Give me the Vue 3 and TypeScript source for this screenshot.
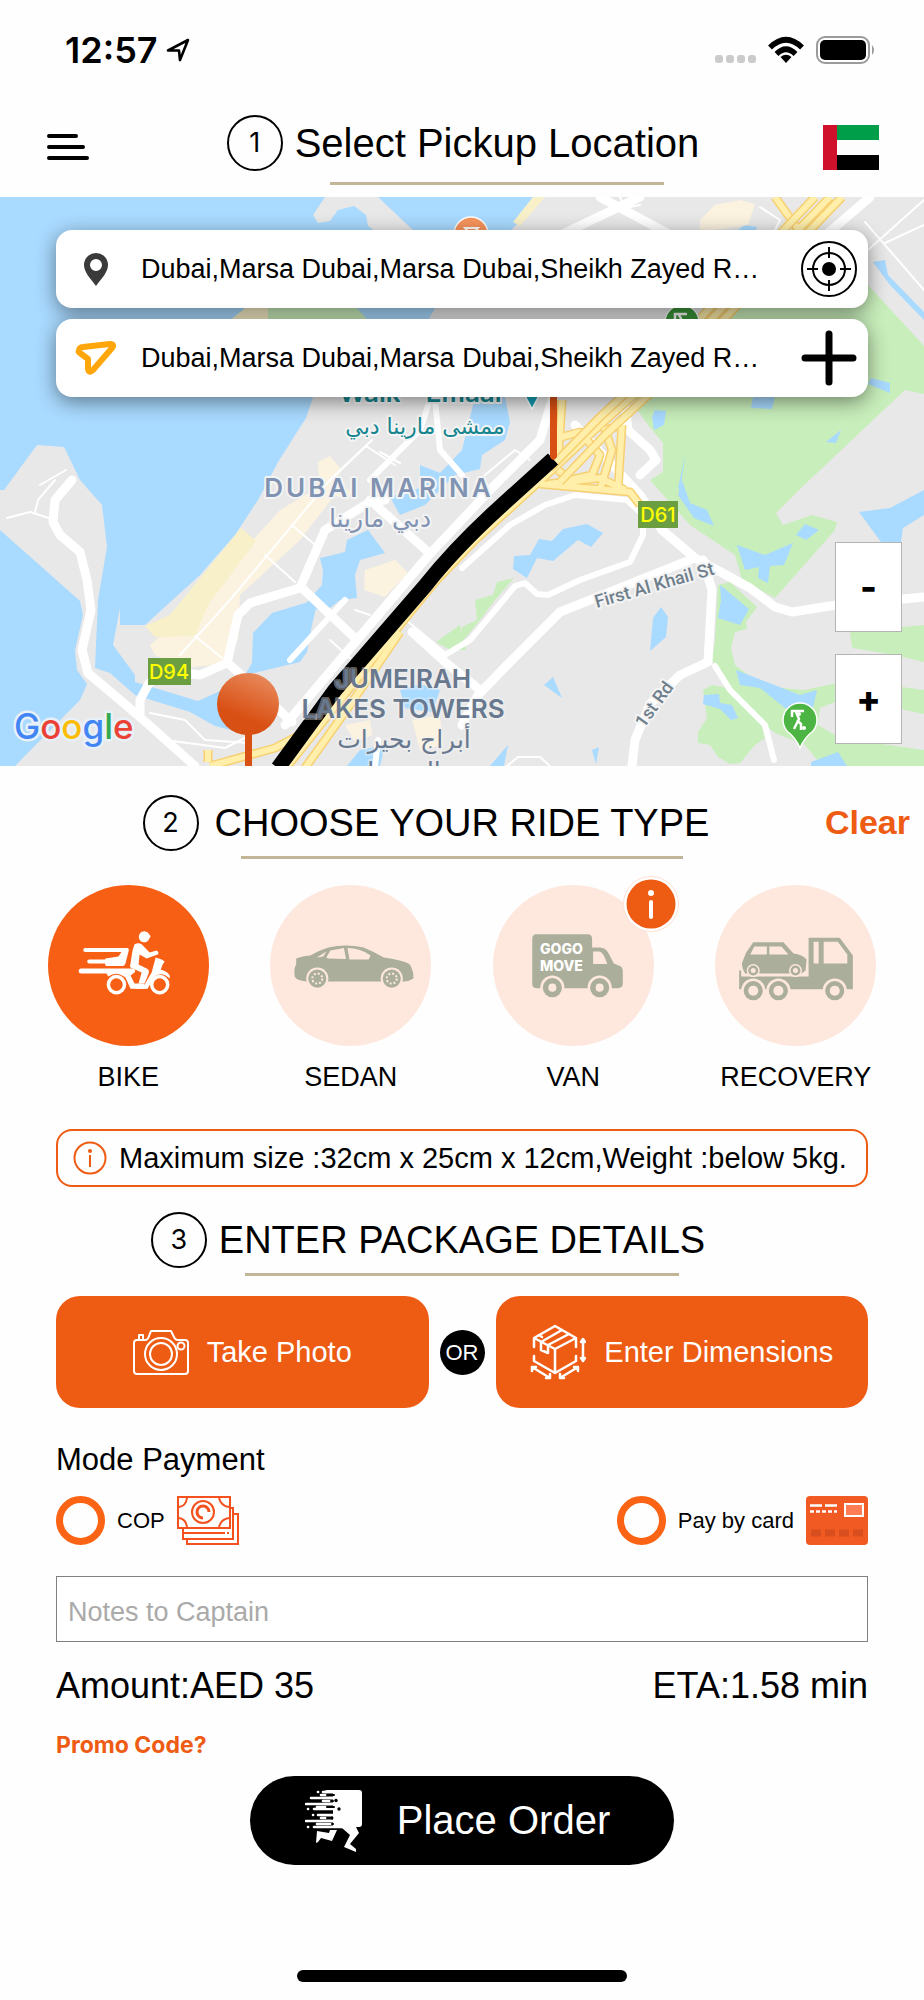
<script setup lang="ts">
import { ref } from 'vue'

interface Ride {
  id: string
  label: string
}

const rides: Ride[] = [
  { id: 'bike', label: 'BIKE' },
  { id: 'sedan', label: 'SEDAN' },
  { id: 'van', label: 'VAN' },
  { id: 'recovery', label: 'RECOVERY' },
]

const selectedRide = ref('bike')
const payment = ref('')
const notes = ref('')
const pickup = ref('Dubai,Marsa Dubai,Marsa Dubai,Sheikh Zayed R…')
const dropoff = ref('Dubai,Marsa Dubai,Marsa Dubai,Sheikh Zayed R…')

const water: string[] = [
  'M0 197H533L516 225 440 300 425 325H360L313 397 306 418 278 462 258 500 235 535 200 575 178 595 145 625H120V608L113 645 135 675V682L198 701 222 690 250 685 250 735 215 726 190 712 135 695 110 673 95 668 98 600 107 547 102 505 80 480 64 447 37 445 4 490H0Z',
  'M0 530 80 601 83 615 75 650 77 670 87 684 80 700 15 766H0Z',
  'M253 633 272 613 305 603 318 600 312 625 307 652 300 662 275 668 245 675 252 663Z',
  'M320 558 345 552 347 540 368 530 385 553 360 560 355 575 357 598 340 600 325 612 305 605 315 593 322 585 323 570Z',
  'M505 397 510 422 505 440 482 455 480 469 455 475 425 505 400 515 390 497 420 488V465L440 473 462 450 475 397Z',
  'M400 690 420 684 440 690 432 712 405 708Z',
  'M347 766 360 750 385 745 380 766Z',
]

const parks: string[] = [
  'M868 285 924 346V394L905 390 800 489 776 513 783 525 812 515 837 522 835 530 775 598 742 580 735 555 690 525 650 480 663 472V443L648 425 634 405 640 385 735 308V290Z',
  'M718 585 730 582 757 607 746 622 747 629 735 632 731 648 735 665 755 680 780 688 805 690 850 680 924 690V714L905 710 870 695 840 700 820 708 818 725 840 738 924 750V766H822L805 745 775 733 765 725 725 685 712 660 715 640Z',
  'M703 690 712 685 728 688 732 696 747 705 760 720 765 738 755 745 740 763 730 764 718 757 710 745 698 743V732L707 718Z',
  'M850 632 924 625V662L895 655 852 648Z',
  'M475 600 493 595 497 582 514 578 495 600 480 620 462 642V627L477 620Z',
  'M436 642 460 625 466 650 450 650Z',
  'M268 300H350L372 325H268Z',
]

const ponds: string[] = [
  'M682 480 690 503 707 510 714 526 694 518 678 495Z',
  'M737 545 765 555 793 543 784 565 770 566 768 583 758 578 759 567 745 570Z',
  'M796 535 805 524 819 530 806 540Z',
  'M720 585 749 609 740 625 718 618 721 600Z',
  'M859 512 890 508 924 490V515L903 528 901 542H881Z',
  'M736 670 800 695 817 690 812 712 785 708 760 688 740 685Z',
  'M704 695 719 694 720 703 732 705 738 718 731 720 720 709 703 704Z',
  'M514 556 530 555 539 539 552 541 563 529 587 524 603 533 591 547 578 540 553 561 537 558 527 578 513 569Z',
  'M661 607 668 617 666 637 650 651 653 618Z',
  'M544 685 553 677 562 698Z',
  'M592 750 599 747 596 764Z',
  'M655 410 666 411 664 425 654 430 652 417Z',
  'M753 397H775L772 409 751 408Z',
  'M871 378 890 383 890 393 868 384Z',
  'M686 452 680 490 678 488Z',
  'M841 430 836 443 826 442Z',
  'M873 262 885 260 888 275 924 312V320L890 285Z',
  'M490 766 508 745 504 766Z',
  'M811 762 838 752 847 766H811Z',
  'M735 232 745 225 757 227 755 232Z',
]

const sands: string[] = [
  'M330 480 345 482 300 540 240 595 238 640 220 664 185 668 155 655 150 645 190 610 235 560 280 510Z',
  'M365 570 395 560 408 573 385 597 364 590Z',
  'M318 462 330 456 342 470 334 482 352 492 348 500 320 490Z',
  'M700 220 715 205 740 200 755 204 748 225 700 232Z',
  'M345 725 370 720 372 735 355 742Z',
  'M412 720 440 715 443 745 420 750Z',
]

const beaches: string[] = [
  'M241 528 256 541 208 605 195 636 155 637 145 626 170 615Z',
  'M533 197H545L520 226 513 222Z',
  'M255 300H268V322H228Z',
]

const wideRoads: string[] = [
  'M72 480 55 500 53 522 60 535 80 552 87 580 91 610 82 650 88 673 140 717 195 766',
  'M140 717 140 700 148 685 160 670 200 675 227 663 238 615 250 603 300 588 312 560 325 530 370 502 385 500',
  'M370 500 428 552',
  'M302 588 357 640',
  'M228 663 292 722',
  'M285 725 357 640 428 556 490 490 540 440 552 400',
  'M575 425 640 495 662 530 695 558 750 588 775 607 792 612 830 606 924 597',
  'M703 560 712 590 708 662 680 675 650 704 635 740 632 766',
  'M690 560 640 580 560 612 510 662 478 695 462 725',
  'M412 632 445 662 480 690',
  'M550 240 640 197M600 197 680 240M820 240 870 197',
  'M625 405 628 430 650 450 656 460 640 475',
]

const midRoads: string[] = [
  'M462 568 510 525 545 505 575 495 627 500 643 515V535L630 562 580 580 548 595 537 594 525 583 515 586 470 640 445 655 415 630',
  'M715 666 730 690 765 725 774 760',
  'M370 480 420 430 430 400M435 400 440 450 462 475',
  'M375 766 378 740M290 660 345 600',
]

const thinRoads: string[] = [
  'M180 655 230 600 330 480 372 440',
  'M265 555 295 582M195 636 222 658M292 525 315 545',
  'M150 713 185 720 205 740 250 743M145 720 165 740 225 748 260 730',
  'M7 518 30 512 55 520M35 512 38 500 55 480M40 485 66 470',
  'M330 480 366 446 395 465M380 452 400 463',
  'M924 200 840 275M865 222 924 290M885 243 924 225',
  'M485 475 515 450 530 460',
  'M507 766 518 757 540 757 550 766',
  'M400 615 430 640M330 640 350 658M355 610 370 615',
  'M620 197 625 208 640 205M760 207 780 220 775 230',
]

const highways: string[] = [
  'M286 768 345 694 412 610 435 582 475 540 550 472 600 425 660 372 830 197',
  'M305 768 350 705 400 632',
  'M540 484 630 492 640 505',
  'M558 462 562 400M558 438 580 432 600 455 592 475 570 480 558 470',
  'M622 425 605 430 612 450 600 490M622 425 618 490M548 484 600 478 625 490',
  'M775 197 795 225 800 230',
  'M208 762 208 750M210 766 275 748 300 735',
]
</script>

<template>
  <main class="screen">
    <div class="status">
      <div class="clock">
        <span>12:57</span>
        <svg width="24" height="24" viewBox="0 0 24 24" aria-hidden="true">
          <path d="M2 12.500 22 2 14 22 13 12.500Z" fill="none" stroke="#000" stroke-width="2.600" stroke-linejoin="round" />
        </svg>
      </div>
      <div class="signals">
        <svg width="41" height="28" viewBox="0 0 41 28" aria-hidden="true">
          <g fill="#cbcbcb">
            <rect x="0" y="19" width="8" height="8" rx="3" /><rect x="11" y="19" width="8" height="8" rx="3" />
            <rect x="22" y="19" width="8" height="8" rx="3" /><rect x="33" y="19" width="8" height="8" rx="3" />
          </g>
        </svg>
        <svg width="36" height="28" viewBox="0 0 36 28" aria-hidden="true">
          <g fill="none" stroke="#000" stroke-width="5.500">
            <path d="M2 11.500Q18-4 34 11.500" /><path d="M8.500 18Q18 8.500 27.500 18" />
          </g>
          <path d="M18 27 12.500 21Q18 16.500 23.500 21Z" />
        </svg>
        <svg width="60" height="28" viewBox="0 0 60 28" aria-hidden="true">
          <rect x="1" y="1" width="52" height="26" rx="8" fill="none" stroke="#9b9b9b" stroke-width="2" />
          <rect x="4" y="4" width="46" height="20" rx="5" />
          <path d="M56 9Q60 14 56 19Z" fill="#9b9b9b" />
        </svg>
      </div>
    </div>

    <header class="topbar">
      <button class="icon-button menu" type="button" aria-label="Menu">
        <svg width="42" height="28" viewBox="0 0 42 28">
          <g stroke="#000" stroke-width="4" stroke-linecap="round"><path d="M2 3H29M2 14H36M2 25H40" /></g>
        </svg>
      </button>
      <div class="step-title">
        <span class="step">1</span>
        <h1 class="title wide">Select Pickup Location</h1>
      </div>
      <button class="icon-button flag" type="button" aria-label="Country">
        <svg width="56" height="45" viewBox="0 0 56 45">
          <rect width="56" height="15" fill="#009e49" /><rect y="15" width="56" height="15" fill="#fdfdfd" />
          <rect y="30" width="56" height="15" /><rect width="14" height="45" fill="#d0112b" />
        </svg>
      </button>
    </header>

    <section class="map" aria-label="Map">
      <svg class="map-art" viewBox="0 197 924 569" preserveAspectRatio="xMidYMid slice" aria-hidden="true">
        <defs>
          <linearGradient id="ball" x1="0.700" y1="0" x2="0.400" y2="0.700">
            <stop offset="0" stop-color="#e88a5c" /><stop offset="1" stop-color="#d95014" />
          </linearGradient>
        </defs>
        <rect y="197" width="924" height="569" fill="#e8e8e8" />
        <path v-for="d in water" :key="d" :d="d" fill="#a9daff" />
        <path d="M325 197 313 215 318 223 330 221 338 210 354 206 366 215 368 226 376 232H415L378 197Z" fill="#e8e8e8" />
        <path v-for="d in parks" :key="d" :d="d" fill="#c8eebb" />
        <path v-for="d in ponds" :key="d" :d="d" fill="#a9daff" />
        <path v-for="d in sands" :key="d" :d="d" fill="#fbf3e0" />
        <path v-for="d in beaches" :key="d" :d="d" fill="#f8f0c8" />
        <g fill="none" stroke="#fff" stroke-linejoin="round" stroke-linecap="round">
          <path v-for="d in thinRoads" :key="d" :d="d" stroke-width="2" />
          <path v-for="d in midRoads" :key="d" :d="d" stroke-width="6" />
          <path v-for="d in wideRoads" :key="d" :d="d" stroke-width="9" />
        </g>
        <g fill="none" stroke-linejoin="round">
          <path v-for="d in highways" :key="d" :d="d" stroke="#f8d070" stroke-width="9" />
          <path v-for="d in highways" :key="d" :d="d" stroke="#ffefab" stroke-width="6" />
          <path d="M550 468 600 417 655 366 815 197M560 482 606 434 668 377 842 197" stroke="#f8d070" stroke-width="9" />
          <path d="M550 468 600 417 655 366 815 197M560 482 606 434 668 377 842 197" stroke="#ffefab" stroke-width="6" />
          <path d="M553 459 500 507Q455 548 425 586L335 690 278 768" stroke="#000" stroke-width="15" />
        </g>
        <path d="M550 390H557V457Q553 463 550 457Z" fill="#d95014" />
        <path d="M245 730H252V766H245Z" fill="#d95014" />
        <circle cx="248" cy="704" r="31" fill="url(#ball)" />

        <g stroke="#fff" stroke-width="1.500">
          <circle cx="471" cy="234" r="17" fill="#f7945c" />
          <path d="M800 748Q796 738 787 731A17 17 0 1 1 813 731Q804 738 800 748Z" fill="#4cb443" />
          <circle cx="682" cy="322" r="17" fill="#3b963a" />
          <path d="M522 390H542L532 409Z" fill="#16a0b5" />
        </g>
        <path d="M465 228H478L473 234H470Z" fill="none" stroke="#fff" stroke-width="2" />
        <g fill="none" stroke="#fff" stroke-width="2.500">
          <path d="M792 717V711H804M796 712 799 719 794 729M797 720 801 724V730" />
          <path d="M675 320V314H687M679 315 683 322" />
        </g>
        <circle cx="799" cy="714" r="2" fill="#fff" /><circle cx="804" cy="728" r="2" fill="#fff" />

        <rect x="148" y="658" width="43" height="27" fill="#6a9e40" />
        <rect x="638" y="501" width="40" height="27" fill="#6a9e40" />
        <g class="sign"><text x="169" y="679">D94</text><text x="658" y="522">D61</text></g>

        <g class="label teal"><text x="422" y="402">Walk - Emaar</text><text x="425" y="434" class="ar small">ممشى مارينا دبي</text></g>
        <g class="label marina"><text x="379" y="497" class="spaced">DUBAI MARINA</text><text x="380" y="527" class="ar">دبي مارينا</text></g>
        <g class="label towers">
          <text x="403" y="688">JUMEIRAH</text><text x="403" y="718">LAKES TOWERS</text>
          <text x="404" y="748" class="ar">أبراج بحيرات</text><text x="404" y="780" class="ar">الجميرا</text>
        </g>
        <g class="label street">
          <text transform="translate(656 591) rotate(-16)">First Al Khail St</text>
          <text transform="translate(659 708) rotate(-54)">1st Rd</text>
        </g>
        <text class="google" x="14" y="739"><tspan fill="#4285f4">G</tspan><tspan fill="#ea4335">o</tspan><tspan fill="#fbbc05">o</tspan><tspan fill="#4285f4">g</tspan><tspan fill="#34a853">l</tspan><tspan fill="#ea4335">e</tspan></text>
      </svg>

      <div class="places">
        <div class="place">
          <svg class="place-icon" width="42" height="36" viewBox="0 0 42 36" aria-hidden="true">
            <path fill-rule="evenodd" d="M21 2A12 12 0 0 0 9 14C9 21 15 27 21 35C27 27 33 21 33 14A12 12 0 0 0 21 2ZM21 8A6 6 0 1 1 21 20A6 6 0 1 1 21 8Z" fill="#3a3a3a" />
          </svg>
          <input v-model="pickup" type="text" aria-label="Pickup location">
          <button class="icon-button" type="button" aria-label="Use my location">
            <svg width="56" height="56" viewBox="0 0 56 56">
              <g fill="none" stroke="#000" stroke-width="2">
                <circle cx="28" cy="28" r="27" /><circle cx="28" cy="28" r="16" />
                <path d="M28 6V17M28 39V50M6 28H17M39 28H50" />
              </g>
              <circle cx="28" cy="28" r="7" />
            </svg>
          </button>
        </div>
        <div class="place">
          <svg class="place-icon" width="42" height="36" viewBox="0 0 42 36" aria-hidden="true">
            <path d="M4 10Q5 7 8 7L35 4Q40 4 37 8L18 30Q14 34 13 29V19L5 13Q3 12 4 10Z" fill="none" stroke="#ffa60a" stroke-width="6" stroke-linejoin="round" />
          </svg>
          <input v-model="dropoff" type="text" aria-label="Drop-off location">
          <button class="icon-button" type="button" aria-label="Add stop">
            <svg width="56" height="56" viewBox="0 0 56 56">
              <path d="M28 4V52M4 28H52" stroke="#000" stroke-width="7" stroke-linecap="round" />
            </svg>
          </button>
        </div>
      </div>

      <div class="zoom">
        <button type="button" aria-label="Zoom out">-</button>
        <button type="button" aria-label="Zoom in">+</button>
      </div>
    </section>

    <section>
      <div class="section-head">
        <span class="step">2</span>
        <h2 class="title">CHOOSE YOUR RIDE TYPE</h2>
        <button class="clear" type="button" @click="selectedRide = ''">Clear</button>
      </div>
      <div class="rides">
        <div v-for="ride in rides" :key="ride.id" class="ride-cell">
          <button
            class="ride"
            :class="{ active: selectedRide === ride.id }"
            type="button"
            :aria-pressed="selectedRide === ride.id"
            @click="selectedRide = ride.id"
          >
            <svg class="ride-art" viewBox="0 0 160 160" aria-hidden="true">
              <circle class="disc" cx="80" cy="80" r="80" />
              <g v-if="ride.id === 'bike'" fill="#fff">
                <path d="M96 46A5.500 5.500 0 1 0 99.500 55.500L102 51 99 47Z" />
                <path d="M37 62.500H79Q81 63 80 66L77 78Q76 80.500 74 80.500H58Q56 80.500 57 73L70 71 73 66.500H37A2 2 0 0 1 37 62.500Z" />
                <path d="M41 74H60V78H41A2 2 0 0 1 41 74Z" />
                <path d="M33 83H84Q88 84 86 87L82 90 86 98H95L98 103H82L77 92Q68 85 60 91L58 88H33A2.300 2.300 0 0 1 33 83Z" />
                <path d="M86 59Q90 57 93 59L101 67 108 65Q111 67 109 69L98 73 91 69 90 79 98 83Q101 84 100 88L96 98H90L93 87 82 82Q81 80 82 78L84 65Z" />
                <path d="M107 72 113 74 116 76 114 79 112 84Q119 86 121 90V93Q112 85 105 92L99 103H86V99H96L103 87Z" />
                <circle cx="68" cy="99" r="8" fill="none" stroke="#fff" stroke-width="3.500" />
                <circle cx="111" cy="99" r="8" fill="none" stroke="#fff" stroke-width="3.500" />
              </g>
              <g v-else-if="ride.id === 'sedan'">
                <path class="body" d="M26 73Q34 70 40 70 48 65 58 62 75 58 93 62 103 66 113 72 134 75 139 79 143 86 142.500 93 138 96 133 96H36Q26 95 24.500 91 23.500 83 26 79Z" />
                <path class="hole" d="M46.500 72 56 66 53 71ZM56 72 60 65 73.500 62.700 75.500 73.500 58 73ZM77 62.700Q90 63 100 70L98 74H79Z" />
                <g v-for="x in [47, 121]" :key="x">
                  <circle class="hole" :cx="x" cy="93" r="11" /><circle class="body" :cx="x" cy="93" r="9" />
                  <circle :cx="x" cy="93" r="5" fill="none" stroke="#fee8de" stroke-width="2" stroke-dasharray="2 1.900" />
                </g>
              </g>
              <g v-else-if="ride.id === 'van'">
                <path class="body" d="M43 49H94Q98.500 49 98.500 54V62H106Q112 62 115 68L120 78 125 80Q129 81 129 86V98Q129 102.500 124 102.500H43Q39 102.500 39 98V54Q39 49 43 49Z" />
                <path class="hole" d="M99.500 66H106Q110 67 113.500 78.500H99.500Z" />
                <g v-for="x in [59, 106]" :key="x">
                  <circle class="hole" :cx="x" cy="102" r="12" /><circle class="body" :cx="x" cy="102" r="9.500" />
                  <circle class="hole" :cx="x" cy="102" r="4" />
                </g>
                <g class="van-text"><text x="68" y="69">GOGO</text><text x="68" y="85">MOVE</text></g>
              </g>
              <g v-else>
                <path class="body" d="M24 85H26V91H93V52.500H124L137 70V103.500H24Z" />
                <path class="hole" d="M98 56.500H103V78H98ZM108 56.500H122L131.500 69V78H108Z" />
                <path class="body" d="M38 57H68L78 68Q87 69 91 74L90 85 86 88H30Q26 82 27 77L31 67Z" />
                <path class="hole" d="M35 69 39 61H51.500V69ZM54 61H66L73 69H54Z" />
                <g v-for="x in [38, 80]" :key="x">
                  <circle class="hole" :cx="x" cy="85" r="6.500" /><circle class="body" :cx="x" cy="85" r="5" /><circle class="hole" :cx="x" cy="85" r="2.500" />
                </g>
                <g v-for="x in [38, 63, 119]" :key="x">
                  <circle class="hole" :cx="x" cy="105" r="12" /><circle class="body" :cx="x" cy="105" r="9.500" /><circle class="hole" :cx="x" cy="105" r="5" />
                </g>
              </g>
            </svg>
            <span>{{ ride.label }}</span>
          </button>
          <button v-if="ride.id === 'van'" class="badge" type="button" aria-label="Van details">
            <svg width="56" height="56" viewBox="0 0 56 56">
              <circle cx="28" cy="28" r="27.500" fill="#fff" stroke="#fee0d2" />
              <circle cx="28" cy="28" r="24.500" fill="#ee5b13" />
              <circle cx="28" cy="17" r="3" fill="#fff" />
              <path d="M28 26V41" stroke="#fff" stroke-width="4" stroke-linecap="round" />
            </svg>
          </button>
        </div>
      </div>
      <p class="limits">
        <svg width="34" height="34" viewBox="0 0 34 34" aria-hidden="true">
          <circle cx="17" cy="17" r="15.500" fill="none" stroke="#ee5b13" stroke-width="2" />
          <circle cx="17" cy="10" r="2" fill="#ee5b13" /><path d="M17 14V26" stroke="#ee5b13" stroke-width="2" />
        </svg>
        <span>Maximum size :32cm x 25cm x 12cm,Weight :below 5kg.</span>
      </p>
    </section>

    <section>
      <div class="section-head package">
        <span class="step">3</span>
        <h2 class="title">ENTER PACKAGE DETAILS</h2>
      </div>
      <div class="package-actions">
        <button class="primary" type="button">
          <svg width="56" height="46" viewBox="0 0 56 46" aria-hidden="true">
            <g fill="none" stroke="#fff" stroke-width="2" stroke-linejoin="round">
              <path d="M4 11H12Q15 11 16 7L18 2H38L41 8Q42 11 45 11H52Q55 11 55 14V42Q55 45 52 45H4Q1 45 1 42V14Q1 11 4 11ZM6 11V6H10V11" />
              <circle cx="28" cy="25" r="16" /><circle cx="28" cy="25" r="11" /><circle cx="48" cy="17" r="3.500" />
            </g>
          </svg>
          <span>Take Photo</span>
        </button>
        <span class="or">OR</span>
        <button class="primary" type="button">
          <svg width="56" height="56" viewBox="0 0 56 56" aria-hidden="true">
            <g fill="none" stroke="#fff" stroke-width="2.500" stroke-linejoin="round" stroke-linecap="round">
              <path d="M4 14 25 2 46 14 25 25ZM4 14V23M4 32V37L25 49V25M25 49 46 37V32M46 14V23" />
              <path d="M11 18 32 6M18 21 39 10M11 18V26L18 29V21M9 11 12 13" />
              <path d="M53 16V36M51 18 53 15 55 18M51 34 53 37 55 34" />
              <path d="M2 43 20 54M2 47V43H6M20 50V54H16M48 43 30 54M48 47V43H44M30 50V54H34" />
            </g>
          </svg>
          <span>Enter Dimensions</span>
        </button>
      </div>
    </section>

    <section class="checkout">
      <fieldset class="payment">
        <legend>Mode Payment</legend>
        <div class="methods">
          <label>
            <input v-model="payment" type="radio" name="payment" value="cop">
            <span>COP</span>
            <svg width="62" height="49" viewBox="0 0 62 49" aria-hidden="true">
              <g fill="none" stroke="#f4511e" stroke-width="2">
                <rect x="1" y="1" width="52" height="31" />
                <path d="M6 33V43H56V12H54M10 44V48H61V18H57M7 37H48M50 37H52" />
                <circle cx="26" cy="16" r="11" />
                <path d="M26 22A6 6 0 1 1 32 16" stroke-width="3" />
                <path d="M2 11Q9 10 10 2M42 2Q44 10 52 11M2 22Q9 23 10 31M42 31Q44 23 52 22" />
              </g>
            </svg>
          </label>
          <label>
            <input v-model="payment" type="radio" name="payment" value="card">
            <span>Pay by card</span>
            <svg width="62" height="49" viewBox="0 0 62 49" aria-hidden="true">
              <rect width="62" height="49" rx="4" fill="#f15a22" />
              <path d="M4 9.500H16M19 9.500H31" stroke="#fff" stroke-width="2.500" />
              <path d="M4 15.500H31" stroke="#fff" stroke-width="2.500" stroke-dasharray="4 2" />
              <rect x="39" y="8" width="18" height="12" fill="#ff7d54" stroke="#fff" stroke-width="2" />
              <path d="M5 37H15M19 37H29M33 37H43M47 37H57" stroke="#d84e1f" stroke-width="7" />
            </svg>
          </label>
        </div>
      </fieldset>
      <input v-model="notes" class="notes" type="text" placeholder="Notes to Captain" aria-label="Notes to Captain">
      <div class="summary"><span>Amount:AED 35</span><span>ETA:1.58 min</span></div>
      <a class="promo" href="#promo">Promo Code?</a>
      <button class="order" type="button">
        <svg width="58" height="62" viewBox="0 0 58 62" aria-hidden="true">
          <g fill="#fff">
            <path d="M19 0H54Q57 0 57 3V34Q57 37 54 37H51L54 43 45 54 51 59V62L39 57 45 45 37 38H28V3Z" />
            <path d="M12 41 24 43 25 40H32L27 51 16 48 13 52 11 53Z" />
          </g>
          <g stroke="#fff" stroke-width="2.600" stroke-linecap="round">
            <path d="M18 2H40M13 2H13.100M6 8H40M16 5H30M1 14H40M18 11H30M3 19H3.100M9 19H40M12 17H30M8 25H8.100M13 25H40M1 31H40M16 28H30M3 37H3.100M9 37H40M12 34H30" />
          </g>
          <g stroke="#000" stroke-width="2" stroke-linecap="round">
            <path d="M22 5H29M26 11H28M22 17H29M22 22H26M22 28H26M27 34H28" />
          </g>
          <circle cx="31" cy="10.500" r="1.700" /><circle cx="34" cy="19" r="1.700" /><circle cx="27" cy="28" r="1.500" />
        </svg>
        <span>Place Order</span>
      </button>
    </section>

    <div class="home-bar"></div>
  </main>
</template>

<style>
body {
  margin: 0;
  background: #fefefe;
}
</style>

<style scoped>
* {
  box-sizing: border-box;
}

.screen {
  font-family: "Liberation Sans", Arial, sans-serif;
  font-size: 27px;
  color: #000;
  background: #fefefe;
  padding-bottom: 18px;
}

button,
input {
  font: inherit;
  color: inherit;
}

button {
  cursor: pointer;
}

svg {
  display: block;
  flex: none;
}

.icon-button {
  border: 0;
  padding: 0;
  background: none;
}

.status {
  display: flex;
  justify-content: space-between;
  align-items: center;
  height: 100px;
  padding: 0 48px 0 65px;
}

.clock {
  display: flex;
  align-items: center;
  gap: 8px;
  font: 600 36px/40px Inter, sans-serif;
}

.signals {
  display: flex;
  gap: 12px;
}

.topbar {
  display: grid;
  grid-template-columns: 1fr auto 1fr;
  align-items: start;
  padding: 15px 45px 12px 47px;
}

.menu,
.flag {
  display: flex;
  align-items: center;
  height: 64px;
}

.flag {
  justify-self: end;
}

.step-title {
  display: flex;
  gap: 12px;
}

.step {
  width: 56px;
  height: 56px;
  border: 2px solid #000;
  border-radius: 50%;
  font: 400 27px/52px Inter, sans-serif;
  text-align: center;
}

.title {
  margin: 0;
  font-size: 38px;
  line-height: 56px;
  font-weight: 400;
}

.title::after {
  content: "";
  display: block;
  height: 3px;
  margin: 5px 26px 0;
  background: #c2b598;
}

.title.wide {
  font-size: 40px;
}

.title.wide::after {
  margin: 11px 35px 0;
}

.map {
  position: relative;
  min-height: 569px;
  padding: 33px 56px 0;
  overflow: hidden;
}

.map-art {
  position: absolute;
  inset: 0;
  width: 100%;
  height: 100%;
}

.label {
  font-family: Inter, sans-serif;
  font-size: 26px;
  font-weight: 600;
  text-anchor: middle;
  stroke: #f4f4f4;
  stroke-width: 4px;
  stroke-linejoin: round;
  paint-order: stroke;
}

.ar {
  font-family: "DejaVu Sans", sans-serif;
  font-size: 25px;
  font-weight: 400;
}

.ar.small {
  font-size: 22px;
}

.spaced {
  letter-spacing: 3px;
}

.teal {
  fill: #15858f;
}

.marina {
  fill: #8193b2;
}

.towers {
  fill: #68788f;
  stroke-opacity: 0.4;
}

.street {
  font-family: Roboto, sans-serif;
  fill: #6f7f8c;
  font-size: 18px;
  font-weight: 500;
}

.sign {
  font: 500 20px Inter, sans-serif;
  fill: #ff0;
  text-anchor: middle;
}

.google {
  font: 500 35px Inter, sans-serif;
  stroke: #e8f1f8;
  stroke-width: 5px;
  stroke-linejoin: round;
  paint-order: stroke;
}

.places {
  position: relative;
  display: grid;
  gap: 11px;
}

.place {
  display: flex;
  align-items: center;
  height: 78px;
  padding: 0 11px 0 19px;
  border-radius: 16px;
  background: #fff;
  box-shadow: 0 5px 20px rgba(0, 0, 0, 0.45);
}

.place input {
  flex: 1;
  min-width: 0;
  margin-left: 24px;
  padding: 0;
  border: 0;
  outline: 0;
  background: none;
}

.zoom {
  position: absolute;
  right: 22px;
  bottom: 22px;
  display: grid;
  gap: 22px;
}

.zoom button {
  width: 67px;
  height: 90px;
  padding: 0;
  border: 1px solid #b4b4b4;
  background: #fff;
  font: 800 36px/88px Inter, sans-serif;
}

.section-head {
  display: grid;
  grid-template-columns: 1fr auto 1fr;
  column-gap: 16px;
  align-items: start;
  padding: 29px 14px 26px;
}

.section-head .step {
  justify-self: end;
}

.package {
  column-gap: 12px;
  padding: 25px 14px 20px;
}

.clear {
  justify-self: end;
  border: 0;
  padding: 0;
  background: none;
  color: #ee5b13;
  font-size: 34px;
  line-height: 54px;
  font-weight: 700;
}

.rides {
  display: grid;
  grid-template-columns: repeat(4, 1fr);
  padding: 0 17px;
}

.ride-cell {
  position: relative;
  display: flex;
  justify-content: center;
}

.ride {
  display: flex;
  flex-direction: column;
  align-items: center;
  gap: 15px;
  padding: 0;
  border: 0;
  background: none;
  line-height: 32px;
}

.ride-art {
  width: 161px;
  height: 161px;
}

.disc,
.hole {
  fill: #fee8de;
}

.body {
  fill: #abae9b;
}

.active .disc {
  fill: #f75f14;
}

.van-text {
  font: 800 14px Inter, sans-serif;
  fill: #fff;
  text-anchor: middle;
}

.badge {
  position: absolute;
  top: -9px;
  left: calc(50% + 50px);
  padding: 0;
  border: 0;
  background: none;
}

.limits {
  display: flex;
  align-items: center;
  gap: 12px;
  min-height: 58px;
  margin: 36px 56px 0;
  padding: 0 15px;
  border: 2px solid #ee5b13;
  border-radius: 16px;
  font-size: 29px;
  white-space: nowrap;
}

.package-actions {
  display: grid;
  grid-template-columns: 1fr auto 1fr;
  align-items: center;
  gap: 11px;
  padding: 0 56px;
}

.primary {
  display: flex;
  align-items: center;
  justify-content: center;
  gap: 18px;
  height: 112px;
  padding: 0;
  border: 0;
  border-radius: 24px;
  background: #ee5b13;
  color: #fff;
  font-size: 29px;
}

.or {
  width: 45px;
  height: 45px;
  border-radius: 50%;
  background: #000;
  color: #fff;
  font-size: 22px;
  line-height: 45px;
  text-align: center;
}

.checkout {
  display: flex;
  flex-direction: column;
  padding: 34px 56px 0;
}

.payment {
  margin: 0;
  padding: 0;
  border: 0;
  min-width: 0;
}

.payment legend {
  padding: 0;
  font-size: 31px;
  line-height: 36px;
}

.methods {
  display: flex;
  justify-content: space-between;
  padding-top: 18px;
}

.methods label {
  display: flex;
  align-items: center;
  gap: 12px;
  font-size: 22px;
}

.methods input {
  appearance: none;
  width: 49px;
  height: 49px;
  margin: 0;
  border: 7px solid #fa6414;
  border-radius: 50%;
}

.methods input:checked {
  background: radial-gradient(#fa6414 45%, #fff 50%);
}

.notes {
  height: 66px;
  margin-top: 31px;
  padding: 6px 11px 0;
  border: 1px solid #808084;
  border-radius: 0;
  background: #fff;
}

.notes::placeholder {
  color: #aaa;
  opacity: 1;
}

.summary {
  display: flex;
  justify-content: space-between;
  margin-top: 22px;
  font-size: 36px;
  line-height: 44px;
}

.promo {
  align-self: flex-start;
  margin-top: 23px;
  color: #ee5b13;
  font: 700 23px/28px Inter, sans-serif;
  text-decoration: none;
}

.order {
  display: flex;
  align-items: center;
  align-self: center;
  gap: 34px;
  height: 89px;
  margin-top: 17px;
  padding: 0 64px 0 55px;
  border: 0;
  border-radius: 45px;
  background: #000;
  color: #fff;
  font-size: 40px;
}

.home-bar {
  width: 330px;
  height: 12px;
  margin: 105px auto 0;
  border-radius: 6px;
  background: #000;
}
</style>
